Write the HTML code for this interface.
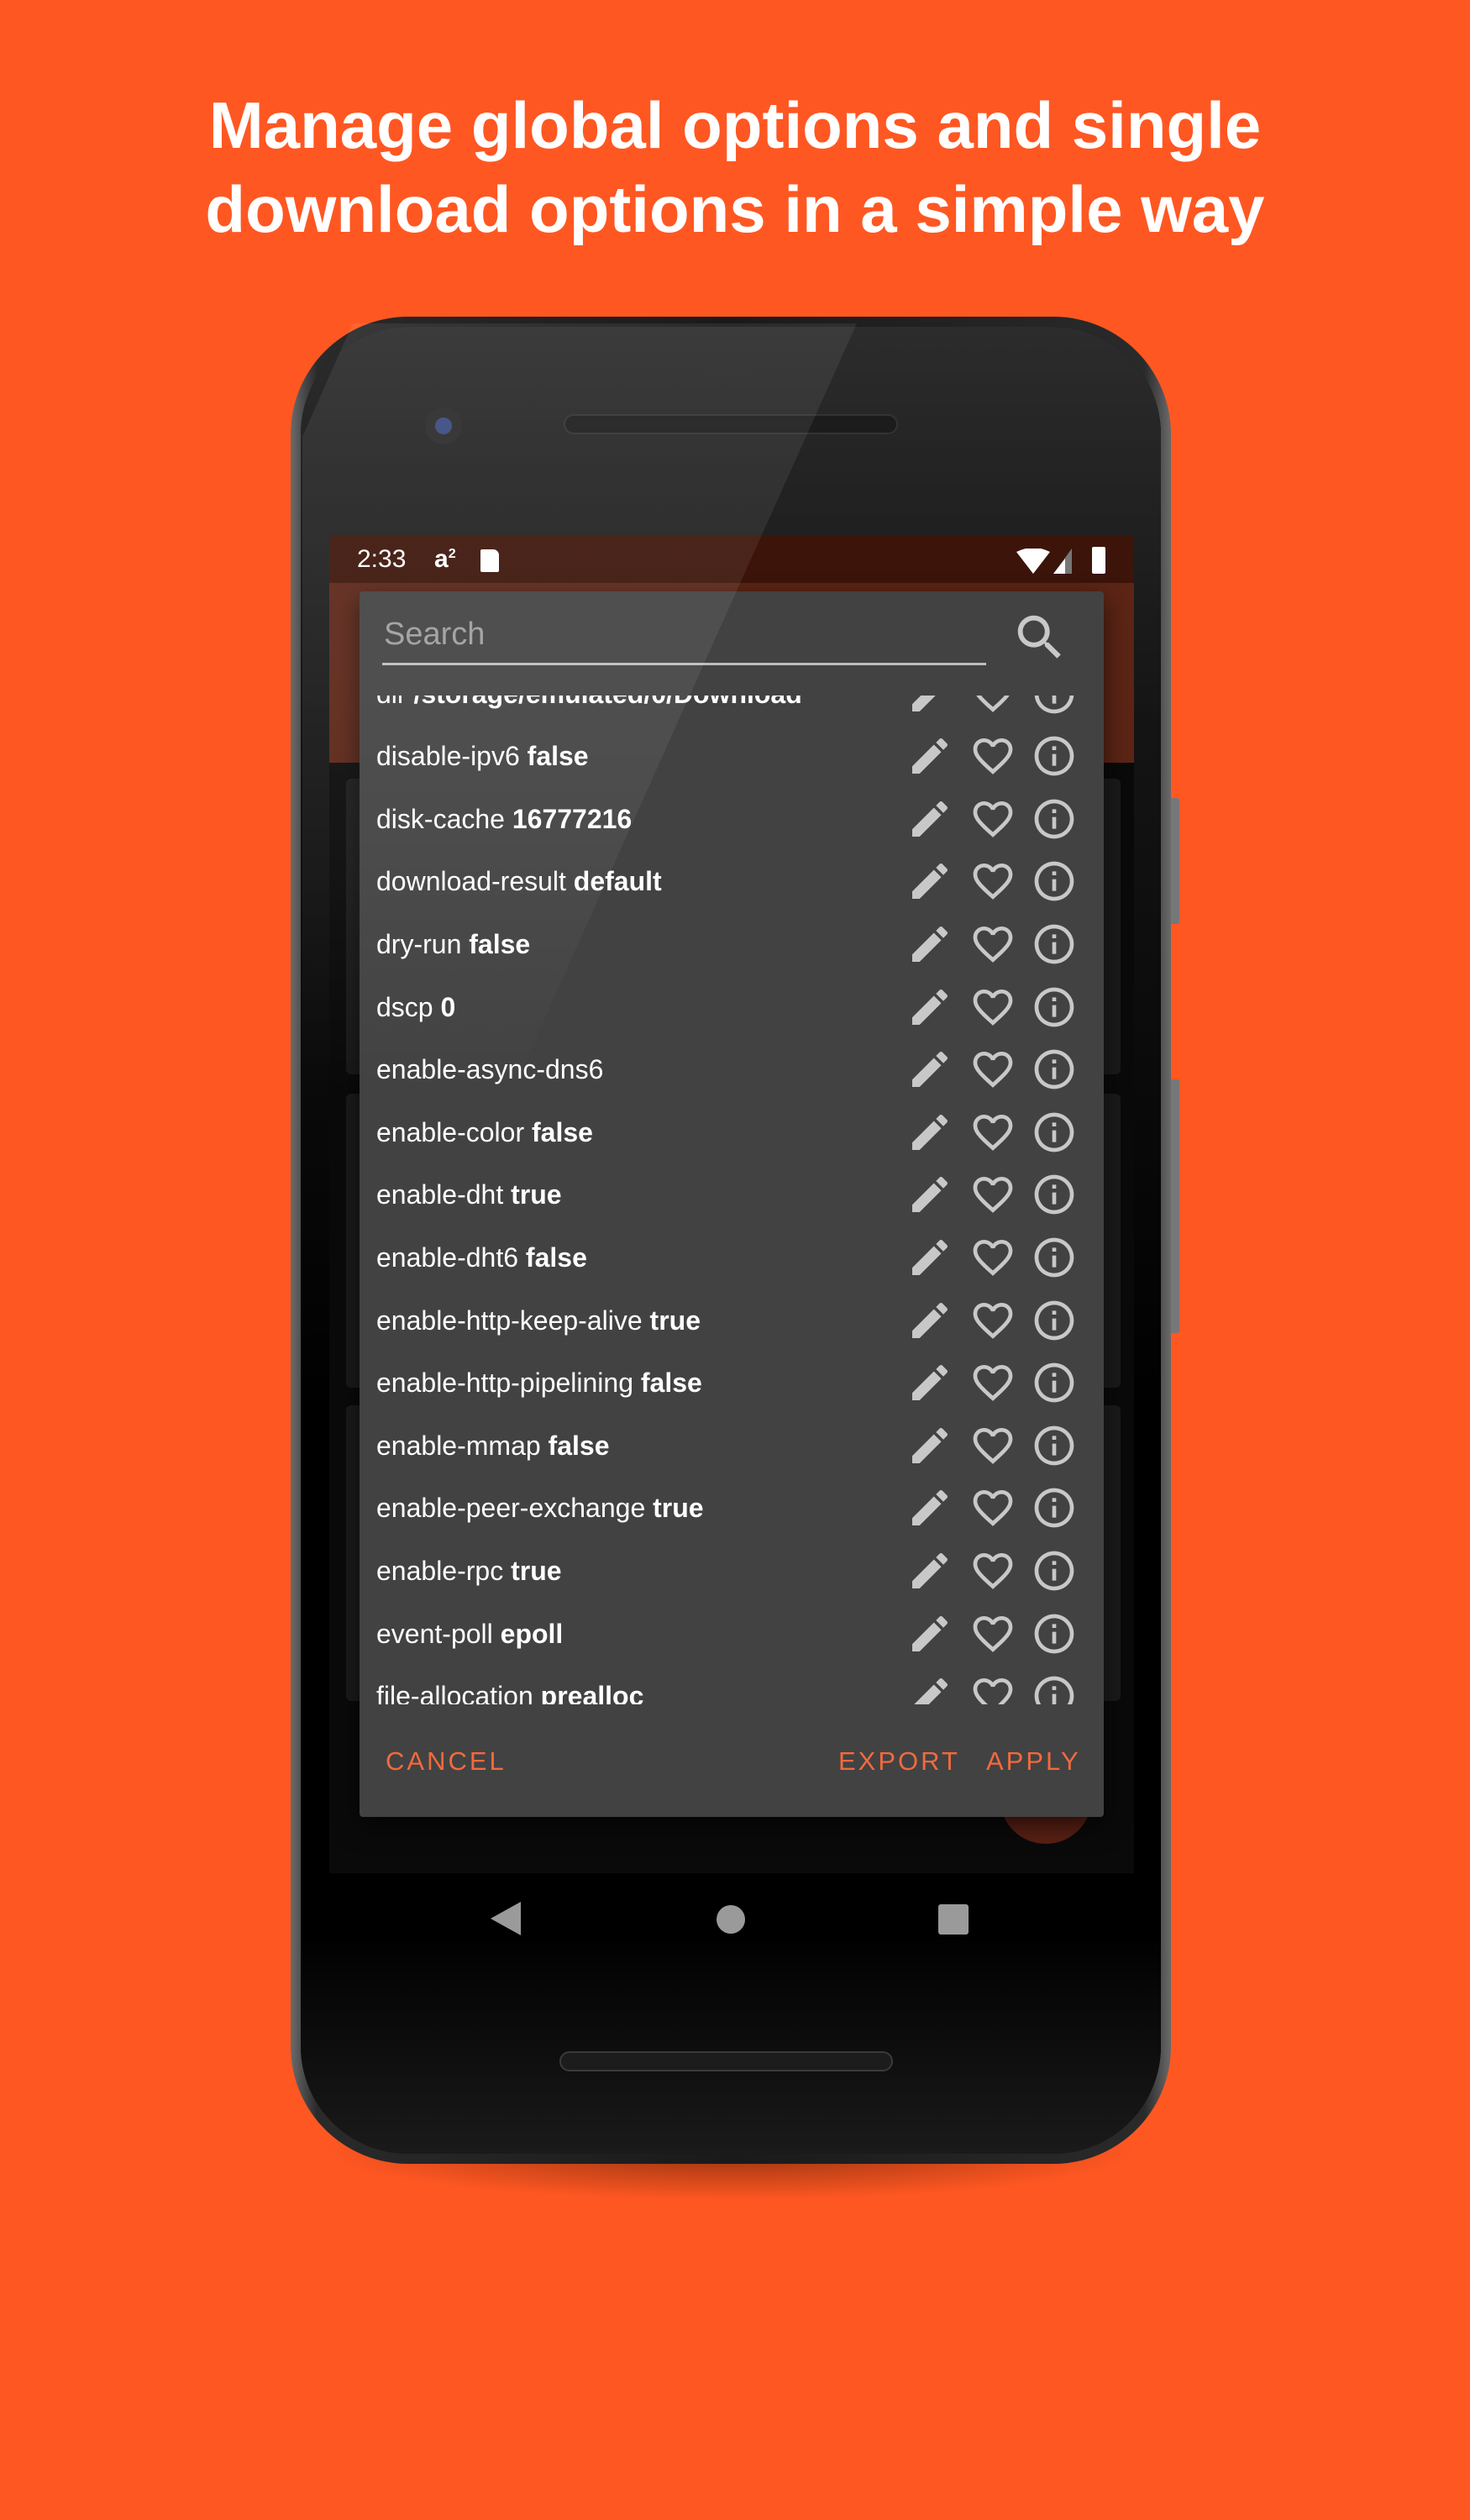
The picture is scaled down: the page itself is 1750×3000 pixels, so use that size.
<!DOCTYPE html>
<html><head><meta charset="utf-8">
<style>
*{margin:0;padding:0;box-sizing:border-box}
body{width:1750px;height:3000px;background:#ff5722;position:relative;overflow:hidden;font-family:"Liberation Sans",sans-serif}
.title{position:absolute;left:0;width:1750px;top:99px;text-align:center;color:#fff;font-weight:bold;font-size:78px;line-height:100px}
.shadow{position:absolute;left:380px;top:2500px;width:980px;height:120px;border-radius:50%;background:radial-gradient(ellipse at center,rgba(60,20,0,.55),rgba(60,20,0,0) 70%)}
.phone{position:absolute;left:346px;top:377px;width:1048px;height:2199px;border-radius:140px;background:linear-gradient(90deg,#6a6a6a,#2a2a2a 3%,#1a1a1a 50%,#2a2a2a 97%,#6a6a6a);}
.bezel{position:absolute;left:12px;top:12px;right:12px;bottom:12px;border-radius:128px;background:#000;overflow:hidden}
.bezel .shine{position:absolute;left:0;top:0;width:100%;height:100%;background:linear-gradient(180deg,#2c2c2c 0,#141414 22%,#000 60%,#000 88%,#1a1a1a 100%)}
.btn{position:absolute;background:#777;width:12px;border-radius:3px}
.screen{position:absolute;left:392px;top:637px;width:958px;height:1593px;background:#0a0a0a;overflow:hidden}
.status{position:absolute;left:0;top:0;width:958px;height:57px;background:#3c1409;color:#fff;font-size:30px}
.appbar{position:absolute;left:0;top:57px;width:958px;height:214px;background:#5c2516}
.card{position:absolute;left:20px;width:922px;background:#1b1b1b;border-radius:6px}
.fab{position:absolute;left:1190px;top:2085px;width:110px;height:110px;border-radius:50%;background:#5a2014}
.dialog{position:absolute;left:428px;top:704px;width:886px;height:1459px;background:#424242;border-radius:4px;box-shadow:0 10px 30px rgba(0,0,0,.6)}
.search{position:absolute;left:29px;top:30px;font-size:38px;color:#9e9e9e}
.uline{position:absolute;left:27px;top:85px;width:719px;height:3px;background:#bdbdbd}
.list{position:absolute;left:0;top:124px;width:886px;height:1201px;overflow:hidden}
.row{position:absolute;left:20px;width:846px;height:75px;color:#fff;font-size:32px;line-height:75px}
.row b{font-weight:bold}
.ic{position:absolute;top:9px;width:56px;height:56px;fill:#c8c8c8}
.bt{position:absolute;top:1375px;color:#f26a3e;font-size:31px;letter-spacing:3px;font-weight:500}
.nav{position:absolute;fill:#9a9a9a}
.glare{position:absolute;left:0;top:0;width:1750px;height:3000px;pointer-events:none;background:linear-gradient(180deg,rgba(255,255,255,.07) 0,rgba(255,255,255,.07) 800px,rgba(255,255,255,.05) 1000px,rgba(255,255,255,0) 1300px);clip-path:polygon(420px 385px,1020px 385px,600px 1320px,360px 1320px,360px 520px)}
</style></head><body>
<div class="title">Manage global options and single<br>download options in a simple way</div>
<div class="shadow"></div>
<div class="btn" style="left:1392px;top:950px;height:150px"></div>
<div class="btn" style="left:1392px;top:1285px;height:302px"></div>
<div class="phone"><div class="bezel"><div class="shine"></div></div></div>
<div style="position:absolute;left:836px;top:424px;width:68px;height:24px;border-radius:12px;background:#2a2a2a"></div>
<div style="position:absolute;left:506px;top:485px;width:44px;height:44px;border-radius:50%;background:#2a2a2a"><div style="position:absolute;left:12px;top:12px;width:20px;height:20px;border-radius:50%;background:#3a4a80"></div></div>
<div style="position:absolute;left:671px;top:493px;width:398px;height:24px;border-radius:12px;background:#1c1c1c;border:2px solid #333"></div>
<div style="position:absolute;left:666px;top:2442px;width:397px;height:24px;border-radius:12px;background:#1c1c1c;border:2px solid #3a3a3a"></div>

<div class="screen">
  <div class="status">
    <span style="position:absolute;left:33px;top:12px">2:33</span>
    <span style="position:absolute;left:125px;top:12px;font-weight:bold">a<sup style="font-size:16px">2</sup></span>
    <div style="position:absolute;left:180px;top:17px;width:22px;height:27px;background:#fff;border-radius:2px 7px 2px 2px"></div>
    <svg style="position:absolute;left:818px;top:16px" width="40" height="30" viewBox="0 0 40 30"><path d="M0 4Q20-6 40 4L20 30Z" fill="#fff"/></svg>
    <svg style="position:absolute;left:862px;top:16px" width="22" height="30" viewBox="0 0 22 30"><path d="M22 0V30H0Z" fill="#777"/><path d="M14 12V30H0Z" fill="#fff"/></svg>
    <div style="position:absolute;left:908px;top:14px;width:16px;height:32px;background:#fff;border-radius:2px"></div>
  </div>
  <div class="appbar"></div>
  <div class="card" style="top:290px;height:352px"></div>
  <div class="card" style="top:665px;height:350px"></div>
  <div class="card" style="top:1036px;height:352px"></div>
</div>
<div class="fab"></div>
<svg class="nav" style="left:584px;top:2264px" width="38" height="40" viewBox="0 0 38 40"><path d="M36 0V40L0 20Z"/></svg>
<div style="position:absolute;left:853px;top:2268px;width:34px;height:34px;border-radius:50%;background:#9a9a9a"></div>
<div style="position:absolute;left:1117px;top:2267px;width:36px;height:36px;border-radius:3px;background:#9a9a9a"></div>

<div class="dialog">
  <div class="search">Search</div>
  <div class="uline"></div>
  <svg style="position:absolute;left:775px;top:20px;fill:#c8c8c8" width="70" height="70" viewBox="0 0 24 24"><path d="M15.5 14h-.79l-.28-.27C15.41 12.59 16 11.11 16 9.5 16 5.91 13.09 3 9.5 3S3 5.91 3 9.5 5.91 16 9.5 16c1.61 0 3.09-.59 4.23-1.57l.27.28v.79l5 4.99L20.49 19l-4.99-5zm-6 0C7.01 14 5 11.99 5 9.5S7.01 5 9.5 5 14 7.01 14 9.5 11.99 14 9.5 14z"/></svg>
  <div class="list" id="list"></div>
  <div class="bt" style="left:31px">CANCEL</div>
  <div class="bt" style="left:570px">EXPORT</div>
  <div class="bt" style="left:746px">APPLY</div>
</div>
<script>
var rows=[["dir","/storage/emulated/0/Download"],["disable-ipv6","false"],["disk-cache","16777216"],["download-result","default"],["dry-run","false"],["dscp","0"],["enable-async-dns6",""],["enable-color","false"],["enable-dht","true"],["enable-dht6","false"],["enable-http-keep-alive","true"],["enable-http-pipelining","false"],["enable-mmap","false"],["enable-peer-exchange","true"],["enable-rpc","true"],["event-poll","epoll"],["file-allocation","prealloc"]];
var E='<path d="M3 17.25V21h3.75L17.81 9.94l-3.75-3.75L3 17.25zM20.71 7.04c.39-.39.39-1.02 0-1.41l-2.34-2.34a.996.996 0 0 0-1.41 0l-1.830 1.83 3.75 3.75 1.83-1.83z"/>';
var H='<path d="M16.5 3c-1.74 0-3.41.81-4.5 2.09C10.91 3.81 9.24 3 7.5 3 4.42 3 2 5.42 2 8.5c0 3.78 3.4 6.86 8.55 11.54L12 21.35l1.45-1.32C18.6 15.36 22 12.28 22 8.5 22 5.42 19.58 3 16.5 3zm-4.4 15.55l-.1.1-.1-.1C7.14 14.24 4 11.39 4 8.5 4 6.5 5.5 5 7.5 5c1.54 0 3.04.99 3.57 2.36h1.87C13.46 5.99 14.96 5 16.5 5c2 0 3.5 1.5 3.5 3.5 0 2.89-3.14 5.74-7.9 10.05z"/>';
var I='<path d="M11 7h2v2h-2zm0 4h2v6h-2zm1-9C6.48 2 2 6.48 2 12s4.48 10 10 10 10-4.48 10-10S17.52 2 12 2zm0 18c-4.41 0-8-3.59-8-8s3.59-8 8-8 8 3.59 8 8-3.59 8-8 8z"/>';
var h='';
for(var k=0;k<rows.length;k++){
 var t=(826+74.6*k)-37.5-828;
 h+='<div class="row" style="top:'+t+'px">'+rows[k][0]+(rows[k][1]?' <b>'+rows[k][1]+'</b>':'')+
 '<svg class="ic" style="left:631px" viewBox="0 0 24 24">'+E+'</svg>'+
 '<svg class="ic" style="left:706px" viewBox="0 0 24 24">'+H+'</svg>'+
 '<svg class="ic" style="left:779px" viewBox="0 0 24 24">'+I+'</svg></div>';
}
document.getElementById('list').innerHTML=h;
</script>
<div class="glare"></div>
</body></html>
